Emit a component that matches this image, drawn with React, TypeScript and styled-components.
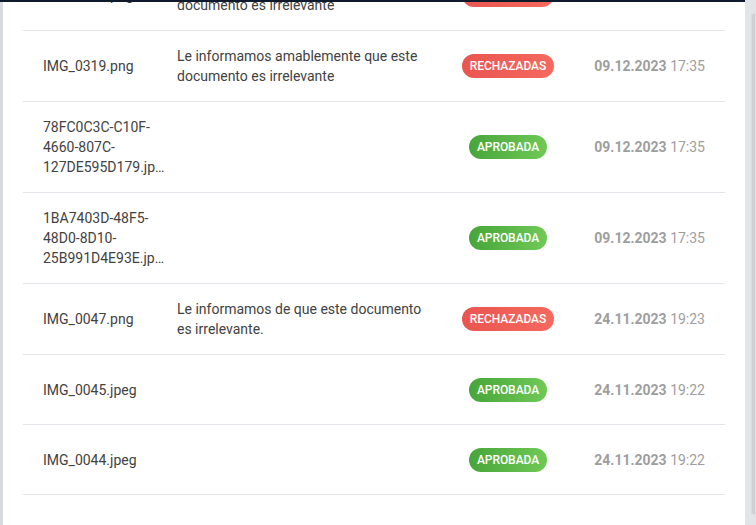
import * as React from "react";
import styled, { createGlobalStyle } from "styled-components";

const GlobalStyle = createGlobalStyle`
  html, body {
    margin: 0;
    padding: 0;
    height: 100%;
    overflow: hidden;
  }
  body {
    font-family: Roboto, "Liberation Sans", Arial, sans-serif;
    background: #e1e4e8;
  }
  #root {
    height: 100%;
  }
`;

const Page = styled.div`
  display: flex;
  height: 100vh;
  overflow: hidden;
  background: #e1e4e8;
`;

const Frame = styled.div`
  flex: 1;
  display: flex;
  flex-direction: column;
  min-width: 0;
`;

const TopBar = styled.div`
  height: 2px;
  background: #0f1b2c;
  flex-shrink: 0;
`;

const Content = styled.div`
  flex: 1;
  display: flex;
  min-height: 0;
`;

const LeftEdge = styled.div`
  width: 3px;
  background: #d7dade;
`;

const Panel = styled.section`
  flex: 1;
  background: #fff;
  padding: 0 20px;
  overflow: hidden;
`;

// the list is scrolled down a bit, so the first row is only half visible
const List = styled.div`
  margin-top: -42px;
`;

const Row = styled.div`
  display: grid;
  grid-template-columns: 122px 252px 134px 1fr;
  column-gap: 12px;
  align-items: center;
  min-height: 70px;
  box-sizing: border-box;
  padding: 15px 20px;
  border-bottom: 1px solid #e3e6ea;
  font-size: 14px;
  line-height: 20px;
  color: #424242;
`;

const FileName = styled.div`
  display: -webkit-box;
  -webkit-box-orient: vertical;
  -webkit-line-clamp: 3;
  overflow: hidden;
  overflow-wrap: anywhere;
`;

const Message = styled.div``;

const BadgeCell = styled.div`
  display: flex;
  justify-content: center;
`;

const Badge = styled.span<{ $status: "ok" | "rejected" }>`
  display: inline-flex;
  align-items: center;
  height: 24px;
  padding: 0 8px;
  border-radius: 12px;
  font-size: 12px;
  font-weight: 500;
  letter-spacing: -0.05px;
  text-transform: uppercase;
  color: #fff;
  background: ${(p) =>
    p.$status === "ok"
      ? "linear-gradient(90deg, #47a53a 0%, #70c956 100%)"
      : "linear-gradient(90deg, #e9564f 0%, #f5695f 100%)"};
`;

const DateCell = styled.div`
  text-align: right;
  color: #9e9e9e;
  white-space: nowrap;
`;

const DateStrong = styled.b`
  font-weight: 700;
`;

const ScrollGutter = styled.div`
  width: 11px;
  background: #e2e4e8;
  display: flex;
  padding-top: 14px;
  box-sizing: border-box;
`;

const Thumb = styled.div`
  margin-left: 6px;
  width: 3px;
  height: 500px;
  background: #cdd0d5;
  border-left: 1px solid #d8dbdf;
`;

type Doc = {
  name: string;
  message?: string;
  status: "ok" | "rejected";
  date: string;
  time: string;
};

const docs: Doc[] = [
  {
    name: "IMG_0320.png",
    message: "Le informamos amablemente que este documento es irrelevante",
    status: "rejected",
    date: "09.12.2023",
    time: "17:36",
  },
  {
    name: "IMG_0319.png",
    message: "Le informamos amablemente que este documento es irrelevante",
    status: "rejected",
    date: "09.12.2023",
    time: "17:35",
  },
  {
    name: "78FC0C3C-C10F-4660-807C-127DE595D179.jpeg",
    status: "ok",
    date: "09.12.2023",
    time: "17:35",
  },
  {
    name: "1BA7403D-48F5-48D0-8D10-25B991D4E93E.jpeg",
    status: "ok",
    date: "09.12.2023",
    time: "17:35",
  },
  {
    name: "IMG_0047.png",
    message: "Le informamos de que este documento es irrelevante.",
    status: "rejected",
    date: "24.11.2023",
    time: "19:23",
  },
  { name: "IMG_0045.jpeg", status: "ok", date: "24.11.2023", time: "19:22" },
  { name: "IMG_0044.jpeg", status: "ok", date: "24.11.2023", time: "19:22" },
];

const App = () => {
  return (
    <Page>
      <GlobalStyle />
      <Frame>
        <TopBar />
        <Content>
          <LeftEdge />
          <Panel>
            <List>
              {docs.map((d, i) => (
                <Row key={i}>
                  <FileName>{d.name}</FileName>
                  <Message>{d.message}</Message>
                  <BadgeCell>
                    <Badge $status={d.status}>
                      {d.status === "ok" ? "Aprobada" : "Rechazadas"}
                    </Badge>
                  </BadgeCell>
                  <DateCell>
                    <DateStrong>{d.date}</DateStrong> {d.time}
                  </DateCell>
                </Row>
              ))}
            </List>
          </Panel>
        </Content>
      </Frame>
      <ScrollGutter>
        <Thumb />
      </ScrollGutter>
    </Page>
  );
};

export default App;
